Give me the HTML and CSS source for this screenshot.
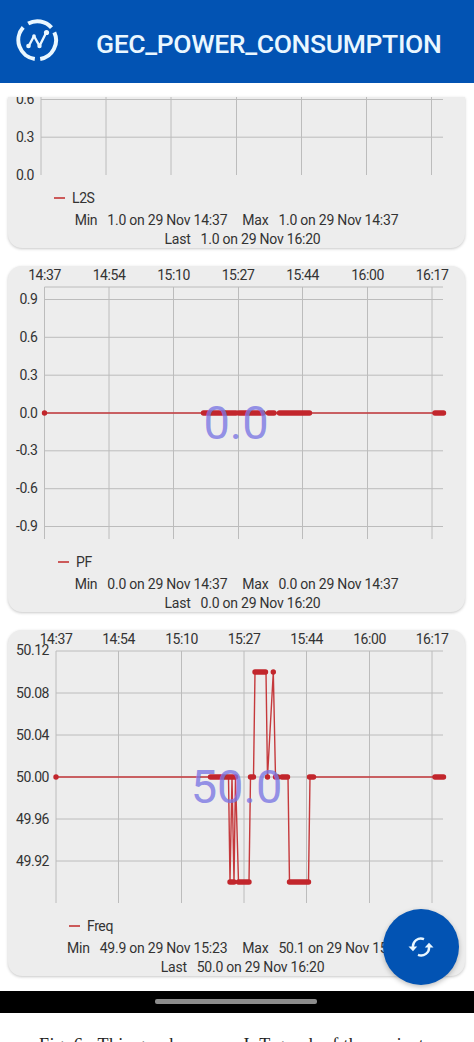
FILE: index.html
```
<!DOCTYPE html>
<html lang="en">
<head>
    <meta charset="UTF-8">
    <meta name="viewport" content="width=device-width, initial-scale=1.0">
    <title>GEC_POWER_CONSUMPTION</title>
    <link rel="stylesheet" href="styles.css">
</head>
<body>
    <header class="topbar">
        <svg class="logo" width="44" height="44" viewBox="0 0 44 44">
            <g fill="none" stroke="#eaf7ff">
                <path stroke-width="4" d="M13.2 5.6A18.8 18.8 0 0 1 36.5 9.6M39.3 14.3A19 19 0 0 1 25.2 41M19.8 40.9A19 19 0 0 1 8.2 9.4"/>
                <path stroke-width="2.4" stroke-linejoin="round" d="M14 27.5L19 18L24.5 28L31 15"/>
            </g>
            <g fill="#eaf7ff">
                <circle cx="13.5" cy="28" r="2.3"/>
                <circle cx="19" cy="18" r="1.8"/>
                <circle cx="24.5" cy="28" r="2.2"/>
                <circle cx="31.5" cy="14.5" r="2.6"/>
            </g>
        </svg>
        <h1 class="title">GEC_POWER_CONSUMPTION</h1>
    </header>

    <main class="cards">
        <section class="card card-cut">
            <svg class="chart" width="457" height="91" viewBox="8 97 457 91">
                <path class="grid" d="M41 99.5H443M41 137.2H443M41 97V175M106 97V175M171 97V175M236.5 97V175M301.5 97V175M366.5 97V175M431.5 97V175"/>
                <g class="axis-y">
                    <text x="34" y="104">0.6</text>
                    <text x="34" y="141.5">0.3</text>
                    <text x="34" y="179.5">0.0</text>
                </g>
            </svg>
            <div class="legend legend-l2s"><i class="dash"></i>L2S</div>
            <div class="stats">
                <span>Min</span><span class="val">1.0 on 29 Nov 14:37</span>
                <span class="next">Max</span><span class="val">1.0 on 29 Nov 14:37</span>
            </div>
            <div class="stats last"><span>Last</span><span class="val">1.0 on 29 Nov 16:20</span></div>
        </section>

        <section class="card">
            <svg class="chart" width="457" height="286" viewBox="8 266 457 286">
                <path class="grid" d="M44.5 287H443M44.5 299.5H443M44.5 337.3H443M44.5 375.2H443M44.5 413H443M44.5 450.8H443M44.5 488.7H443M44.5 526.5H443M44.5 287V539M109 287V539M173.5 287V539M238.5 287V539M302.5 287V539M367.5 287V539M432 287V539"/>
                <g class="axis-x">
                    <text x="44.5" y="280">14:37</text>
                    <text x="109" y="280">14:54</text>
                    <text x="173.5" y="280">15:10</text>
                    <text x="238" y="280">15:27</text>
                    <text x="302.5" y="280">15:44</text>
                    <text x="367.5" y="280">16:00</text>
                    <text x="432" y="280">16:17</text>
                </g>
                <g class="axis-y">
                    <text x="37.5" y="304">0.9</text>
                    <text x="37.5" y="341.7">0.6</text>
                    <text x="37.5" y="379.5">0.3</text>
                    <text x="37.5" y="417.5">0.0</text>
                    <text x="37.5" y="455">-0.3</text>
                    <text x="37.5" y="493">-0.6</text>
                    <text x="37.5" y="530.7">-0.9</text>
                </g>
                <path class="line" d="M44.5 413H443"/>
                <path class="dots" d="M44.5 413h.01M203.5 413H236M239 413H263M268.5 413H274M279.5 413H309.5M435 413H443.5"/>
                <text class="value" x="236" y="439">0.0</text>
            </svg>
            <div class="legend legend-pf"><i class="dash"></i>PF</div>
            <div class="stats">
                <span>Min</span><span class="val">0.0 on 29 Nov 14:37</span>
                <span class="next">Max</span><span class="val">0.0 on 29 Nov 14:37</span>
            </div>
            <div class="stats last"><span>Last</span><span class="val">0.0 on 29 Nov 16:20</span></div>
        </section>

        <section class="card">
            <svg class="chart" width="457" height="286" viewBox="8 630 457 286">
                <path class="grid" d="M56 651H443M56 693H443M56 735H443M56 777H443M56 819H443M56 861H443M56 651V903M118.5 651V903M181.5 651V903M244 651V903M306.5 651V903M369.5 651V903M432 651V903"/>
                <g class="axis-x">
                    <text x="56" y="644">14:37</text>
                    <text x="118.5" y="644">14:54</text>
                    <text x="181.5" y="644">15:10</text>
                    <text x="244" y="644">15:27</text>
                    <text x="306.5" y="644">15:44</text>
                    <text x="369.5" y="644">16:00</text>
                    <text x="432" y="644">16:17</text>
                </g>
                <g class="axis-y">
                    <text x="49" y="655">50.12</text>
                    <text x="49" y="697.5">50.08</text>
                    <text x="49" y="739.5">50.04</text>
                    <text x="49" y="781.5">50.00</text>
                    <text x="49" y="823.5">49.96</text>
                    <text x="49" y="865.5">49.92</text>
                </g>
                <path class="line" d="M56 777H228.5L230 882L232 777L234 882L235.5 777L238.5 882H249L250.5 777H253.5L255 672H266L267.5 777L273.3 672L275.5 777H288L289.5 882H308.5L310 777H443"/>
                <path class="dots" d="M56 777h.01M210.5 777H235.5M230 882H234M238.5 882H249M250.5 777H253.5M255 672H265.5M267.5 777h.01M273.3 672h.01M275.5 777H278M282 777H287.5M289.5 882H308.5M309.5 777H313.5M435 777H443.5"/>
                <text class="value" x="236.5" y="803">50.0</text>
            </svg>
            <div class="legend legend-freq"><i class="dash"></i>Freq</div>
            <div class="stats">
                <span>Min</span><span class="val">49.9 on 29 Nov 15:23</span>
                <span class="next">Max</span><span class="val">50.1 on 29 Nov 15:31</span>
            </div>
            <div class="stats last"><span>Last</span><span class="val">50.0 on 29 Nov 16:20</span></div>
        </section>
        <button class="refresh" type="button" aria-label="Refresh">
            <svg width="26" height="22" viewBox="0 0 26 22">
                <path fill="none" stroke="#eaf7ff" stroke-width="2.4" d="M16 3.1A8 8 0 0 0 5 11.5M10 18.9A8 8 0 0 0 21 10.5"/>
                <path fill="#eaf7ff" d="M.5 10.5H9.2L5 15.3ZM16.8 11.5H25.5L21 6.7Z"/>
            </svg>
        </button>
    </main>

    <div class="navbar"><div class="pill"></div></div>
    <p class="caption">Fig. 6.&nbsp; This graph uses an IoT graph of the project</p>
</body>
</html>
```
FILE: styles.css
```
* {
    box-sizing: border-box;
}
body {
    margin: 0;
    height: 1042px;
    overflow: hidden;
    background-color: #fff;
    font-family: Roboto, Arial, sans-serif;
    color: #333;
}
.topbar {
    display: flex;
    align-items: center;
    height: 83px;
    padding: 0 0 3px 15px;
    background-color: #0253b3;
}
.logo {
    flex: none;
    margin-top: -1px;
}
.title {
    margin: 7px 0 0 37px;
    font-size: 26.5px;
    font-weight: 500;
    line-height: 32px;
    letter-spacing: -0.35px;
    color: #eaf7ff;
    white-space: nowrap;
}
.cards {
    position: relative;
    display: flex;
    flex-direction: column;
    gap: 18px;
    height: 908px;
    padding: 14px 9px 0 8px;
}
.card {
    height: 346px;
    background-color: #ededed;
    border-radius: 14px;
    box-shadow: 0 1px 3px rgba(0, 0, 0, 0.22);
}
.card-cut {
    height: 151px;
    border-radius: 0 0 14px 14px;
}
.chart {
    display: block;
    font-size: 14px;
    letter-spacing: -0.45px;
}
.grid {
    fill: none;
    stroke: #bcbcbc;
    stroke-width: 1;
}
.axis-x {
    fill: #333;
    text-anchor: middle;
}
.axis-y {
    fill: #333;
    text-anchor: end;
}
.line {
    fill: none;
    stroke: #c5393c;
    stroke-width: 1.4;
}
.dots {
    fill: none;
    stroke: #c2262c;
    stroke-width: 5.4;
    stroke-linecap: round;
}
.value {
    font-size: 47px;
    letter-spacing: 0;
    fill: #7b76e3;
    fill-opacity: 0.8;
    text-anchor: middle;
}
.legend {
    display: flex;
    align-items: center;
    height: 20px;
    font-size: 14px;
    letter-spacing: -0.4px;
}
.legend-l2s {
    padding-left: 46px;
}
.legend-pf {
    padding-left: 50px;
}
.legend-freq {
    padding-left: 61px;
}
.dash {
    width: 11px;
    height: 1.5px;
    margin-right: 7px;
    background-color: #cc5a5a;
}
.stats {
    display: flex;
    justify-content: center;
    height: 19px;
    margin-top: 2px;
    font-size: 14px;
    line-height: 20px;
    letter-spacing: -0.23px;
    white-space: nowrap;
}
.last {
    margin-top: 0;
    padding-left: 12px;
}
.val {
    margin-left: 10px;
}
.next {
    margin-left: 15px;
}
.refresh {
    position: absolute;
    right: 15px;
    bottom: 6px;
    display: flex;
    align-items: center;
    justify-content: center;
    width: 76px;
    height: 76px;
    padding: 0;
    border: 0;
    border-radius: 50%;
    background-color: #0253b3;
    box-shadow: 0 2px 5px rgba(0, 0, 0, 0.25);
}
.navbar {
    display: flex;
    justify-content: center;
    height: 22px;
    padding-top: 8px;
    background-color: #000;
}
.pill {
    width: 162px;
    height: 5px;
    margin-right: 2px;
    border-radius: 2px;
    background-color: #8c8c8c;
}
.caption {
    margin: 22px 0 0 39px;
    font-family: "Liberation Serif", serif;
    font-size: 18px;
    line-height: 20px;
    letter-spacing: 0.37px;
    color: #222;
    white-space: nowrap;
}
```
